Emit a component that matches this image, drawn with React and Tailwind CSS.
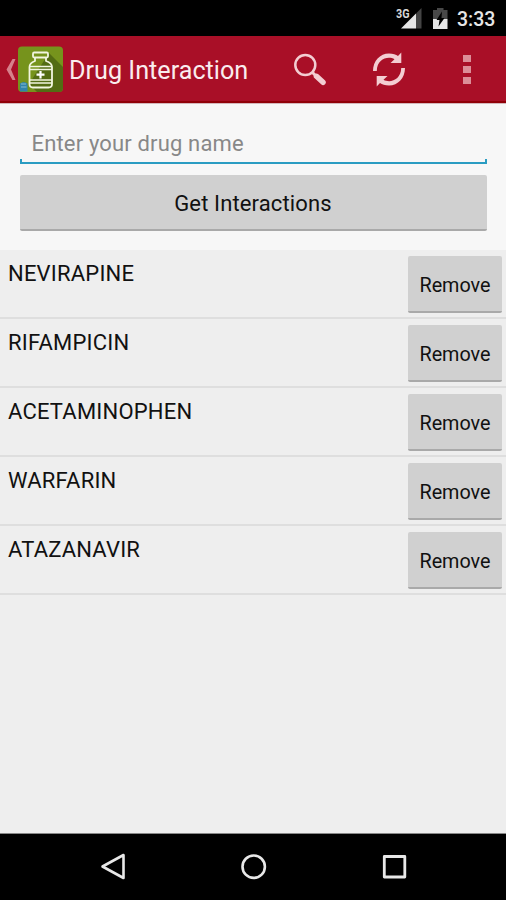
const drugs = ["NEVIRAPINE", "RIFAMPICIN", "ACETAMINOPHEN", "WARFARIN", "ATAZANAVIR"];

function StatusBar() {
  return (
    <div className="flex h-9 shrink-0 items-center justify-end bg-black pr-[11px] text-[#e6e6e6]">
      <svg className="mr-[11px] h-9 w-[27px]" viewBox="395 0 27 36">
        <path d="M401 28.500 L416 13.500 V28.500Z" fill="#e6e6e6" />
        <path d="M416 13.500 L421.500 8 V28.500H416Z" fill="#444" />
        <text x="396" y="17.500" fontFamily="Roboto" fontSize="12" fontWeight="700" textLength="13.500" lengthAdjust="spacingAndGlyphs" fill="#d8d8d8">3G</text>
      </svg>
      <svg className="mr-[9px] h-9 w-[15px]" viewBox="433 0 15 36">
        <path d="M433 10 H437 V8 H443.500 V10 H447.500 V19 H433Z" fill="#484848" />
        <path d="M433 19 H447.500 V29 H433Z" fill="#e6e6e6" />
        <path d="M442 11.500 L436.500 20 H439.500 L438.500 26.500 L444.500 18 H441.500Z" fill="#000" />
      </svg>
      <span className="w-[38px] pt-[3px] whitespace-nowrap text-[19.5px] leading-9 font-medium">3:33</span>
    </div>
  );
}

function AppIcon() {
  return (
    <svg className="h-[66px] w-[46px]" viewBox="18 36 46 66">
      <rect x="18" y="46.500" width="45" height="45.500" rx="4" fill="#76931c" />
      <path d="M49 53 L63 67 V88 Q63 92 59 92 H37 L29 84Z" fill="#536c13" />
      <g fill="none" stroke="#f2f5df" strokeWidth="1.800" strokeLinejoin="round">
        <rect x="33" y="52.500" width="15" height="5" rx="1.200" />
        <path d="M35 57.500 V61 Q29.500 63 29.500 67 V84 Q29.500 87.500 33 87.500 H48.500 Q52 87.500 52 84 V67 Q52 63 46 61 V57.500" />
        <path d="M29.500 66.500 H52 M29.500 69.500 H52 M29.500 80 H52 M29.500 83 H52" strokeWidth="1.300" />
      </g>
      <path d="M40.500 71 V78.500 M36.500 74.700 H44.500" stroke="#fff" strokeWidth="2.200" />
      <path d="M20 83.500 Q23.500 80.500 27.500 83.500 V91.500 H20Z" fill="#3184ac" />
      <path d="M21 84 H26 M21 87 H26.500" stroke="#9dcbd9" strokeWidth=".8" />
    </svg>
  );
}

function ActionBar() {
  return (
    <header className="flex h-[67px] shrink-0 items-start border-b-2 border-[#900008] bg-[#a90f27]">
      <svg className="h-[66px] w-[18px]" viewBox="0 36 18 66">
        <path d="M15.500 59 L12.500 59 L6.500 69.500 L12.500 80 L15.500 80 L11 69.500Z" fill="#d6808b" />
      </svg>
      <AppIcon />
      <h1 className="ml-[5px] w-[222px] whitespace-nowrap text-[25.2px] leading-[70px] font-normal text-[#faecee]">Drug Interaction</h1>
      <svg className="h-[66px] w-[40px]" viewBox="291 36 40 66">
        <circle cx="305.300" cy="65" r="10" fill="none" stroke="#f3cdd2" strokeWidth="2.500" />
        <path d="M312.500 72.500 L316 76" stroke="#f3cdd2" strokeWidth="3" />
        <path d="M316.500 76.300 L323 82.300" stroke="#f3cdd2" strokeWidth="5.500" strokeLinecap="round" />
      </svg>
      <svg className="ml-[38px] h-[66px] w-[40px]" viewBox="369 36 40 66">
        <g fill="#f3cdd2">
          <path d="M373 71 C373 61 380 53.500 389 53.500 C393 53.500 396 54.500 398 56 L401.300 52.500 V63 H390.500 L394.500 59.300 C388 55.500 377 59 376.800 71Z" />
          <path d="M373 71 C373 61 380 53.500 389 53.500 C393 53.500 396 54.500 398 56 L401.300 52.500 V63 H390.500 L394.500 59.300 C388 55.500 377 59 376.800 71Z" transform="rotate(180 389 69.500)" />
        </g>
      </svg>
      <div className="mt-[19px] ml-[54px] flex flex-col gap-[4px]">
        <i className="h-[7px] w-[8px] bg-[#dc8e98]" />
        <i className="h-[7px] w-[8px] bg-[#dc8e98]" />
        <i className="h-[7px] w-[8px] bg-[#dc8e98]" />
      </div>
    </header>
  );
}

function NavBar() {
  return (
    <nav className="flex h-[67px] shrink-0 items-center justify-center gap-[112px] border-t border-[#888] bg-black pl-[2px]">
      <svg className="h-7 w-7" viewBox="0 0 28 28" fill="none" stroke="#e8e8e8" strokeWidth="2.600" strokeLinejoin="round">
        <path d="M2.500 13.500 L23.500 2 V25Z" />
      </svg>
      <svg className="h-7 w-7" viewBox="0 0 28 28" fill="none" stroke="#e8e8e8" strokeWidth="2.600">
        <circle cx="13.700" cy="13.700" r="11.200" />
      </svg>
      <svg className="h-7 w-7" viewBox="0 0 28 28" fill="none" stroke="#e8e8e8" strokeWidth="2.800" strokeLinejoin="round">
        <rect x="4.300" y="3.500" width="20.500" height="20.500" />
      </svg>
    </nav>
  );
}

export default function App() {
  return (
    <div className="flex h-[900px] w-[506px] flex-col overflow-hidden bg-[#eeeeee] font-[Roboto,sans-serif] text-[#111]">
      <StatusBar />
      <ActionBar />
      <section className="h-[147px] shrink-0 border-t border-[#d3b8bb] bg-[#f7f7f7] px-[19.5px] pt-[22px]">
        <div className="flex h-[38px] flex-col">
          <div className="h-[33px] pl-[12px] text-[22px] leading-[35px] tracking-[0.16px] whitespace-nowrap text-[#888]">Enter your drug name</div>
          <div className="h-[5px] border-x-2 border-b-2 border-[#2a9cc2]" />
        </div>
        <button className="mt-[11px] block h-[56px] w-full rounded-[2px] border-b-2 border-[#a9a9a9] bg-[#d0d0d0] pt-px text-[22px] leading-[55px] tracking-[0.13px]">Get Interactions</button>
      </section>
      <ul className="shrink-0">
        {drugs.map((name) => (
          <li key={name} className="flex h-[69px] justify-between border-b-2 border-[#dedede] pr-1 pl-2">
            <span className="mt-[10px] text-[22px] leading-7 tracking-[0.2px]">{name}</span>
            <button className="mt-[6px] h-[57px] w-[94px] rounded-[2px] border-b-2 border-[#a9a9a9] bg-[#d0d0d0] pt-[5px] text-[19.8px] leading-[50px]">Remove</button>
          </li>
        ))}
      </ul>
      <div className="grow" />
      <NavBar />
    </div>
  );
}
